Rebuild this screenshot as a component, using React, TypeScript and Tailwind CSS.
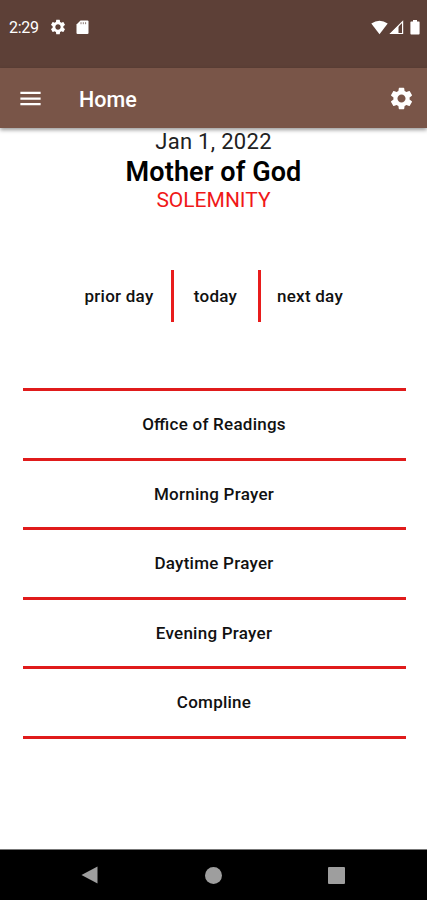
import { MdMenu, MdSettings } from 'react-icons/md';

const hours = [
  'Office of Readings',
  'Morning Prayer',
  'Daytime Prayer',
  'Evening Prayer',
  'Compline',
];

const StatusBar = () => (
  <div className="flex h-[68px] items-start bg-[#5d4037] pt-[18px] text-white">
    <div className="flex h-[18px] w-full items-center pl-[9px] pr-[7px]">
      <span className="w-[40px] pt-[2px] text-[16px] leading-[18px] tracking-[-0.3px]">2:29</span>
      <MdSettings className="size-[18px]" />
      <svg className="ml-[9px] h-[15px] w-[13px]" viewBox="0 0 13 15" fill="currentColor">
        <path d="M4.5 0.5H11.5Q12.5 0.5 12.5 1.5V13Q12.5 14 11.5 14H1.5Q0.5 14 0.5 13V4.5Z" />
        <path d="M5 2.2v2M7.3 2.2v2M9.6 2.2v2" stroke="#8d7b75" strokeWidth="1" />
      </svg>
      <svg className="ml-auto h-[15px] w-[17px]" viewBox="0 0 17 15" fill="currentColor">
        <path d="M0.3 3.6Q8.5 -2 16.7 3.6L8.5 14.2Z" />
      </svg>
      <svg className="ml-[1px] h-[15px] w-[15px]" viewBox="0 0 15 15">
        <path d="M1.8 13.5L13.6 1.7V13.5Z" fill="none" stroke="white" strokeWidth="1.2" />
        <path d="M1 14L9.5 5.5V14Z" fill="white" />
      </svg>
      <svg className="ml-[6px] h-[15px] w-[10px]" viewBox="0 0 10 15" fill="currentColor">
        <path d="M3 0H7V1.5H9Q9.6 1.5 9.6 2.3V13.5Q9.6 14.4 8.8 14.4H1.2Q0.4 14.4 0.4 13.5V2.3Q0.4 1.5 1.2 1.5H3Z" />
      </svg>
    </div>
  </div>
);

const AppBar = () => (
  <header className="relative flex h-[60px] items-center bg-[#795548] pl-[17px] pr-[12px] text-white shadow-[0_2px_4px_rgba(0,0,0,0.4)]">
    <button className="flex">
      <MdMenu className="size-[27px]" />
    </button>
    <h1 className="ml-[35px] pt-[3px] text-[21.5px] font-medium leading-[26px]">Home</h1>
    <button className="ml-auto flex">
      <MdSettings className="size-[27px]" />
    </button>
  </header>
);

const NavBar = () => (
  <nav className="flex h-[51px] items-center border-t border-[#777] bg-black pl-[81px] pr-[82px] text-[#9e9e9e]">
    <svg className="h-[18px] w-[17px]" viewBox="0 0 17 18" fill="currentColor">
      <path d="M0.5 9L16.5 0.5V17.5Z" />
    </svg>
    <div className="ml-[107px] size-[17px] rounded-full bg-current" />
    <div className="ml-auto size-[17px] rounded-[1px] bg-current" />
  </nav>
);

export default function App() {
  return (
    <div className="flex h-[900px] w-[427px] flex-col overflow-hidden bg-white font-['Roboto',sans-serif] text-black">
      <StatusBar />
      <AppBar />

      <main className="flex flex-1 flex-col items-center">
        <div className="flex flex-col items-center text-center">
          <p className="h-[28px] text-[22px] leading-[28px] tracking-[0.3px] text-[#212121]">Jan 1, 2022</p>
          <h2 className="h-[30px] text-[27px] font-semibold leading-[32px] tracking-[0.1px]">Mother of God</h2>
          <p className="h-[28px] text-[21px] leading-[28px] text-[#f01818]">SOLEMNITY</p>
        </div>

        {/* Day navigation */}
        <div className="mt-[56px] flex h-[52px] text-[17px] font-medium tracking-[0.25px] text-[#111]">
          <button className="w-[104px] pt-[1px]">prior day</button>
          <button className="w-[90px] border-x-[3px] border-[#e81c1c] pr-[1px] pt-[1px]">today</button>
          <button className="w-[99px] pr-[1px] pt-[1px]">next day</button>
        </div>

        {/* Hours */}
        <div className="ml-px mt-[66px] w-[383px] border-t-[3px] border-[#e01b1b]">
          {hours.map((hour) => (
            <button
              key={hour}
              className="block h-[69.6px] w-full border-b-[3px] border-[#e01b1b] pt-[1px] text-[17px] font-medium tracking-[0.25px] text-[#111] [font-feature-settings:'liga']"
            >
              {hour}
            </button>
          ))}
        </div>
      </main>

      <NavBar />
    </div>
  );
}
